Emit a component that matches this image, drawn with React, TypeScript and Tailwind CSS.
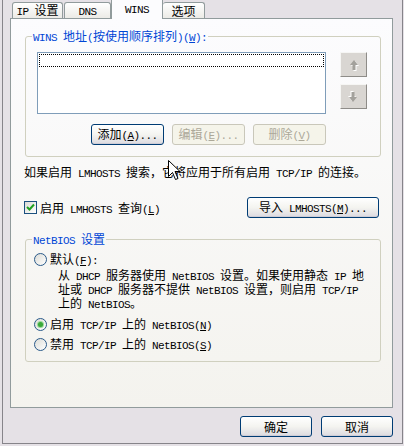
import { Fragment } from 'react';

// Latin runs get a half-width mono face so they line up like SimSun; "&X" underlines X
function T({ s }: { s: string }) {
    const parts = s.split(/([\x20-\x7e]+)/).filter(Boolean);
    return (
        <span className="whitespace-pre">
            {parts.map((p, i) => {
                if (!/^[\x20-\x7e]+$/.test(p)) return <span key={i}>{p}</span>;
                const m = p.split('&');
                return (
                    <span key={i} className="font-['Liberation_Mono',monospace] text-[11px] leading-none tracking-[-0.6px]">
                        {m[0]}
                        {m.slice(1).map((q, j) => (
                            <Fragment key={j}>
                                <u className="underline-offset-1">{q[0]}</u>
                                {q.slice(1)}
                            </Fragment>
                        ))}
                    </span>
                );
            })}
        </span>
    );
}

function Btn({ label, disabled, className = "" }: { label: string; disabled?: boolean; className?: string }) {
    return disabled ? (
        <div className={`h-[21px] rounded-[3px] border border-[#c9c7ba] bg-[#f5f4ea] text-[#aca899] flex items-center justify-center ${className}`}>
            <T s={label} />
        </div>
    ) : (
        <div className={`h-[21px] rounded-[3px] border border-[#003c74] bg-gradient-to-b from-white via-[#f4f4f0] to-[#dcdae0] shadow-[inset_0_-1px_0_#cfcdd6] flex items-center justify-center ${className}`}>
            <T s={label} />
        </div>
    );
}

function ArrowBtn({ down }: { down?: boolean }) {
    return (
        <div className="w-[27px] h-[25px] bg-[#d9d6d2] border border-t-[#f6f6f4] border-l-[#f6f6f4] border-r-[#8e8c88] border-b-[#8e8c88] flex items-center justify-center">
            <svg width="11" height="12" viewBox="0 0 11 12" className={down ? "rotate-180" : ""}>
                <path d="M6 1 L10 6 H7.5 V11 H4.5 V6 H2 Z" fill="#ffffff" transform="translate(1 1)" />
                <path d="M6 1 L10 6 H7.5 V11 H4.5 V6 H2 Z" fill="#a3a19c" />
            </svg>
        </div>
    );
}

function Radio({ checked }: { checked?: boolean }) {
    return (
        <div className="w-[13px] h-[13px] rounded-full border border-[#2a5a8a] bg-gradient-to-br from-[#dcdcd7] to-white flex items-center justify-center">
            {checked && <div className="w-[5px] h-[5px] rounded-full bg-[#3aa83a] shadow-[0_0_0_1px_#9ad89a]" />}
        </div>
    );
}

export default function App() {
    return (
        <div className="relative w-[404px] h-[446px] overflow-hidden bg-[#e5e1e6] pl-[2px] pr-[1px] pb-[2px] font-['Noto_Sans_CJK_SC',sans-serif] text-[12px] leading-[14px] text-black">
            <div className="h-full border-x border-b border-[#86848a] pl-[7px] pr-[9px] flex flex-col">
                {/* Tabs */}
                <div className="relative z-10 flex items-end h-[18px] pl-[2px]">
                    <div className="w-[51px] h-[16px] border border-b-0 border-[#919b9c] rounded-t-[3px] bg-gradient-to-b from-white to-[#ecebe6] flex items-center justify-center">
                        <T s="IP 设置" />
                    </div>
                    <div className="ml-[1px] w-[47px] h-[16px] border border-b-0 border-[#919b9c] rounded-t-[3px] bg-gradient-to-b from-white to-[#ecebe6] flex items-center justify-center">
                        <T s="DNS" />
                    </div>
                    <div className="w-[52px] h-[19px] -mb-px border-x border-[#919b9c] bg-[#fcfcfe] flex items-start justify-center pt-[1px]">
                        <T s="WINS" />
                    </div>
                    <div className="w-[42px] h-[16px] border border-b-0 border-l-0 border-[#919b9c] rounded-t-[3px] bg-gradient-to-b from-white to-[#ecebe6] flex items-center justify-center">
                        <T s="选项" />
                    </div>
                </div>

                {/* Tab page */}
                <div className="h-[390px] border border-[#919b9c] bg-gradient-to-b from-[#fcfcfe] to-[#f4f3ee] pl-[13px] pr-[10px] flex flex-col">
                    <fieldset className="ml-px mt-[10px] w-[356px] border border-[#d0d0bf] rounded-[3px]">
                        <legend className="ml-[6px] px-[1px] h-[14px] text-[#0046d5]">
                            <T s="WINS 地址(按使用顺序排列)(&W):" />
                        </legend>
                        <div className="flex pt-[9px] pl-[11px] pb-[11px]">
                            <div className="w-[289px] flex flex-col">
                                <div className="h-[62px] border border-[#7f9db9] bg-white p-[1px]">
                                    <div className="h-[13px] border border-dotted border-black" />
                                </div>
                                <div className="mt-[10px] flex justify-end gap-[8px]">
                                    <Btn label="添加(&A)..." className="w-[73px]" />
                                    <Btn label="编辑(&E)..." disabled className="w-[73px]" />
                                    <Btn label="删除(&V)" disabled className="w-[73px]" />
                                </div>
                            </div>
                            <div className="ml-[14px] flex flex-col gap-[7px]">
                                <ArrowBtn />
                                <ArrowBtn down />
                            </div>
                        </div>
                    </fieldset>

                    <div className="mt-[8px] h-[14px]">
                        <T s="如果启用 LMHOSTS 搜索，它将应用于所有启用 TCP/IP 的连接。" />
                    </div>

                    <div className="mt-[18px] w-[355px] h-[21px] flex items-center justify-between">
                        <div className="flex items-center">
                            <div className="w-[13px] h-[13px] border border-[#1c5180] bg-gradient-to-br from-[#dcdcd7] to-white flex items-center justify-center">
                                <svg width="9" height="9" viewBox="0 0 9 9">
                                    <path d="M1 4 L3.5 6.5 L8 1.5" fill="none" stroke="#21a121" strokeWidth="2" />
                                </svg>
                            </div>
                            <span className="ml-[3px] h-[14px]">
                                <T s="启用 LMHOSTS 查询(&L)" />
                            </span>
                        </div>
                        <Btn label="导入 LMHOSTS(&M)..." className="w-[132px]" />
                    </div>

                    <fieldset className="ml-px mt-[14px] w-[356px] border border-[#d0d0bf] rounded-[3px]">
                        <legend className="ml-[6px] px-[1px] h-[14px] text-[#0046d5]">
                            <T s="NetBIOS 设置" />
                        </legend>
                        <div className="pt-[6px] pl-[8px] pb-[10px] flex flex-col">
                            <div className="h-[14px] flex items-center">
                                <Radio />
                                <span className="ml-[3px] h-[14px]"><T s="默认(&F):" /></span>
                            </div>
                            <div className="mt-[2px] pl-[24px]">
                                <div className="h-[14px]"><T s="从 DHCP 服务器使用 NetBIOS 设置。如果使用静态 IP 地" /></div>
                                <div className="h-[14px]"><T s="址或 DHCP 服务器不提供 NetBIOS 设置，则启用 TCP/IP" /></div>
                                <div className="h-[14px]"><T s="上的 NetBIOS。" /></div>
                            </div>
                            <div className="mt-[7px] h-[14px] flex items-center">
                                <Radio checked />
                                <span className="ml-[3px] h-[14px]"><T s="启用 TCP/IP 上的 NetBIOS(&N)" /></span>
                            </div>
                            <div className="mt-[6px] h-[14px] flex items-center">
                                <Radio />
                                <span className="ml-[3px] h-[14px]"><T s="禁用 TCP/IP 上的 NetBIOS(&S)" /></span>
                            </div>
                        </div>
                    </fieldset>
                </div>

                {/* Dialog buttons */}
                <div className="mt-[8px] flex justify-end gap-[9px]">
                    <Btn label="确定" className="w-[72px]" />
                    <Btn label="取消" className="w-[72px]" />
                </div>
            </div>

            {/* Mouse pointer */}
            <svg className="absolute left-[168px] top-[160px]" width="13" height="21" viewBox="0 0 13 21">
                <path d="M0.5 0.5 L0.5 16.5 L4.5 12.5 L7.5 19.5 L10 18.5 L7 11.5 L12 11.5 Z" fill="white" stroke="black" strokeWidth="1" />
            </svg>
        </div>
    );
}
